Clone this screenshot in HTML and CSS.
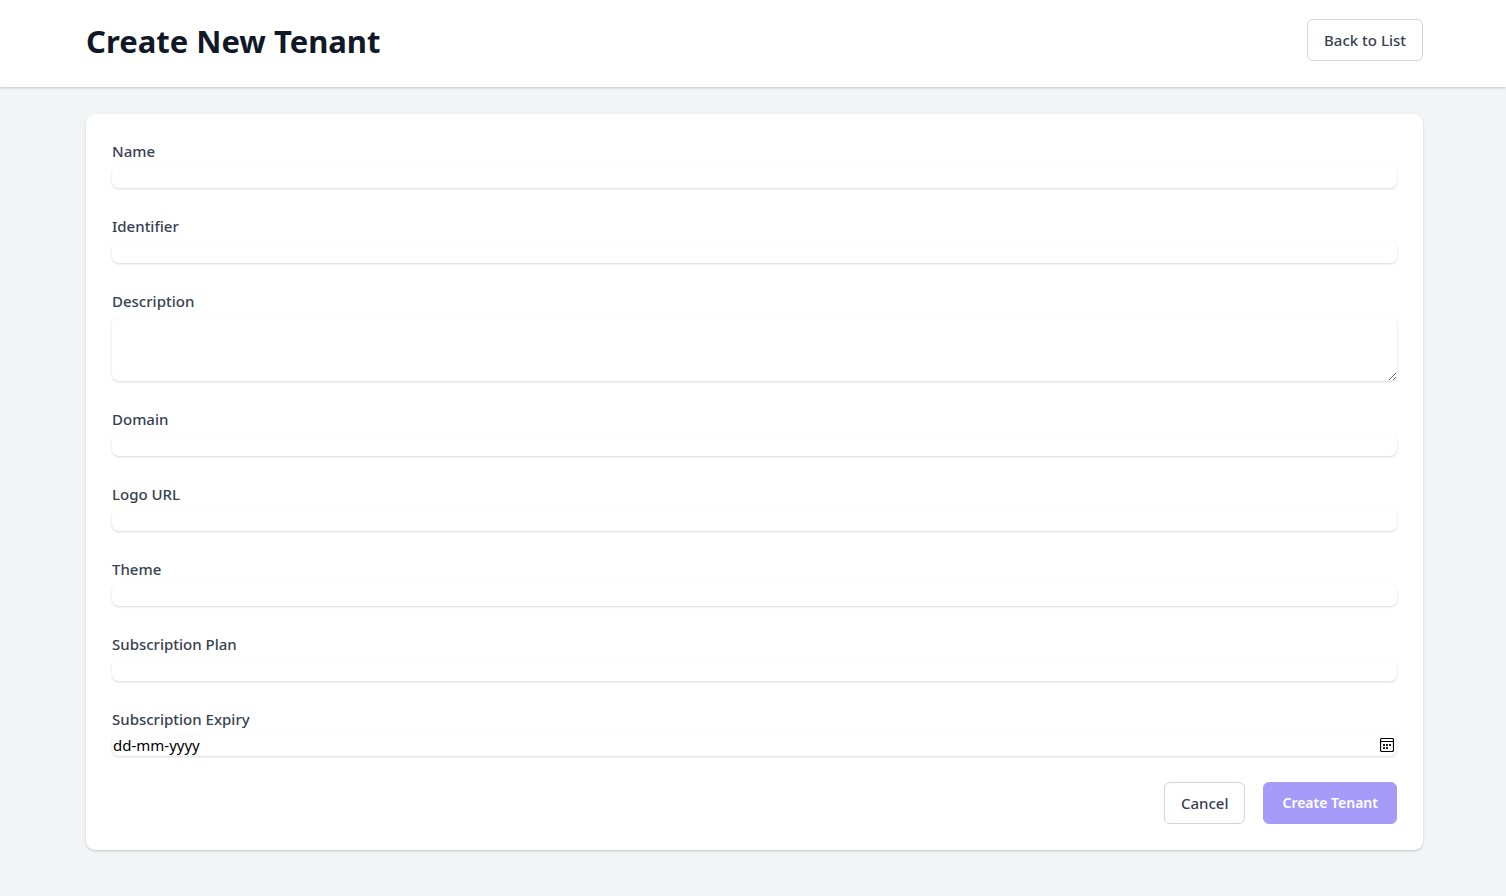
FILE: index.html
```html
<!DOCTYPE html>
<html lang="en">
<head>
<meta charset="utf-8">
<meta name="viewport" content="width=device-width, initial-scale=1">
<title>Create New Tenant</title>
<link rel="stylesheet" href="styles.css">
</head>
<body>
<header class="page-header">
  <h1 class="page-title">Create New Tenant</h1>
  <a class="btn" href="#list">Back to List</a>
</header>
<main class="page-main">
  <form class="card">
    <div class="field">
      <label class="label" for="name">Name</label>
      <input class="control" id="name" type="text">
    </div>
    <div class="field">
      <label class="label" for="identifier">Identifier</label>
      <input class="control" id="identifier" type="text">
    </div>
    <div class="field">
      <label class="label" for="description">Description</label>
      <textarea class="control control-area" id="description"></textarea>
    </div>
    <div class="field">
      <label class="label" for="domain">Domain</label>
      <input class="control" id="domain" type="text">
    </div>
    <div class="field">
      <label class="label" for="logo">Logo URL</label>
      <input class="control" id="logo" type="text">
    </div>
    <div class="field">
      <label class="label" for="theme">Theme</label>
      <input class="control" id="theme" type="text">
    </div>
    <div class="field">
      <label class="label" for="plan">Subscription Plan</label>
      <input class="control" id="plan" type="text">
    </div>
    <div class="field">
      <label class="label" for="expiry">Subscription Expiry</label>
      <div class="control date-box">
        <input class="date-input" id="expiry" type="text" placeholder="dd-mm-yyyy">
        <button class="date-button" type="button" aria-label="Open calendar">
          <svg width="14" height="14" viewBox="0 0 14 14" fill="none" stroke="#000">
            <rect x="0.5" y="0.5" width="13" height="13" rx="1.5" stroke-width="1.2"/>
            <path d="M1 3.5h12"/>
            <path d="M3 7h2M6 7h2M9 7h2M3 10h2M6 10h2" stroke-width="2" stroke="#222"/>
          </svg>
        </button>
      </div>
    </div>
    <div class="actions">
      <button class="btn" type="button">Cancel</button>
      <button class="btn btn-primary" type="submit">Create Tenant</button>
    </div>
  </form>
</main>
</body>
</html>
```
FILE: styles.css
```css
* {
  box-sizing: border-box;
}

body {
  margin: 0;
  background: #f3f4f6;
  color: #374151;
  font: 500 15px/22px "Segoe UI", "Noto Sans", sans-serif;
}

.page-header {
  display: flex;
  align-items: flex-start;
  justify-content: space-between;
  padding: 19px 83px 24px 86px;
  background: #fff;
  box-shadow: 0 1px 3px rgba(0, 0, 0, 0.1), 0 1px 2px rgba(0, 0, 0, 0.1);
}

.page-title {
  margin: 0;
  color: #111827;
  font-size: 31px;
  font-weight: 700;
  line-height: 44px;
}

.page-main {
  padding: 27px 83px 45px 86px;
}

.card {
  display: flex;
  flex-direction: column;
  gap: 26px;
  padding: 25px 26px 26px;
  border-radius: 9px;
  background: #fff;
  box-shadow: 0 1px 3px rgba(0, 0, 0, 0.1), 0 1px 2px rgba(0, 0, 0, 0.1);
}

.field {
  display: flex;
  flex-direction: column;
  gap: 3px;
}

.label {
  line-height: 24px;
}

.control {
  width: 100%;
  height: 22px;
  padding: 0 1px;
  border: 0;
  border-radius: 7px;
  background: #fff;
  color: #000;
  font: inherit;
  font-weight: 400;
  box-shadow: 0 1px 3px rgba(0, 0, 0, 0.1), 0 1px 2px rgba(0, 0, 0, 0.06);
}

.control-area {
  height: 65px;
  resize: vertical;
}

.date-box {
  display: flex;
  align-items: center;
  padding-right: 3px;
}

.date-input {
  flex: 1;
  min-width: 0;
  padding: 0;
  border: 0;
  background: transparent;
  font: inherit;
}

.date-input::placeholder {
  color: #000;
  opacity: 1;
}

.date-button {
  display: flex;
  padding: 0;
  border: 0;
  background: none;
}

.actions {
  display: flex;
  justify-content: flex-end;
  gap: 18px;
}

.btn {
  padding: 9px 16px;
  border: 1px solid #d1d5db;
  border-radius: 6px;
  background: #fff;
  color: #374151;
  font: inherit;
  text-decoration: none;
}

.btn-primary {
  padding: 9px 18px;
  border-color: #a79bfa;
  background: #a79bfa;
  color: #fff;
  font-size: 14px;
  font-weight: 600;
}
```
